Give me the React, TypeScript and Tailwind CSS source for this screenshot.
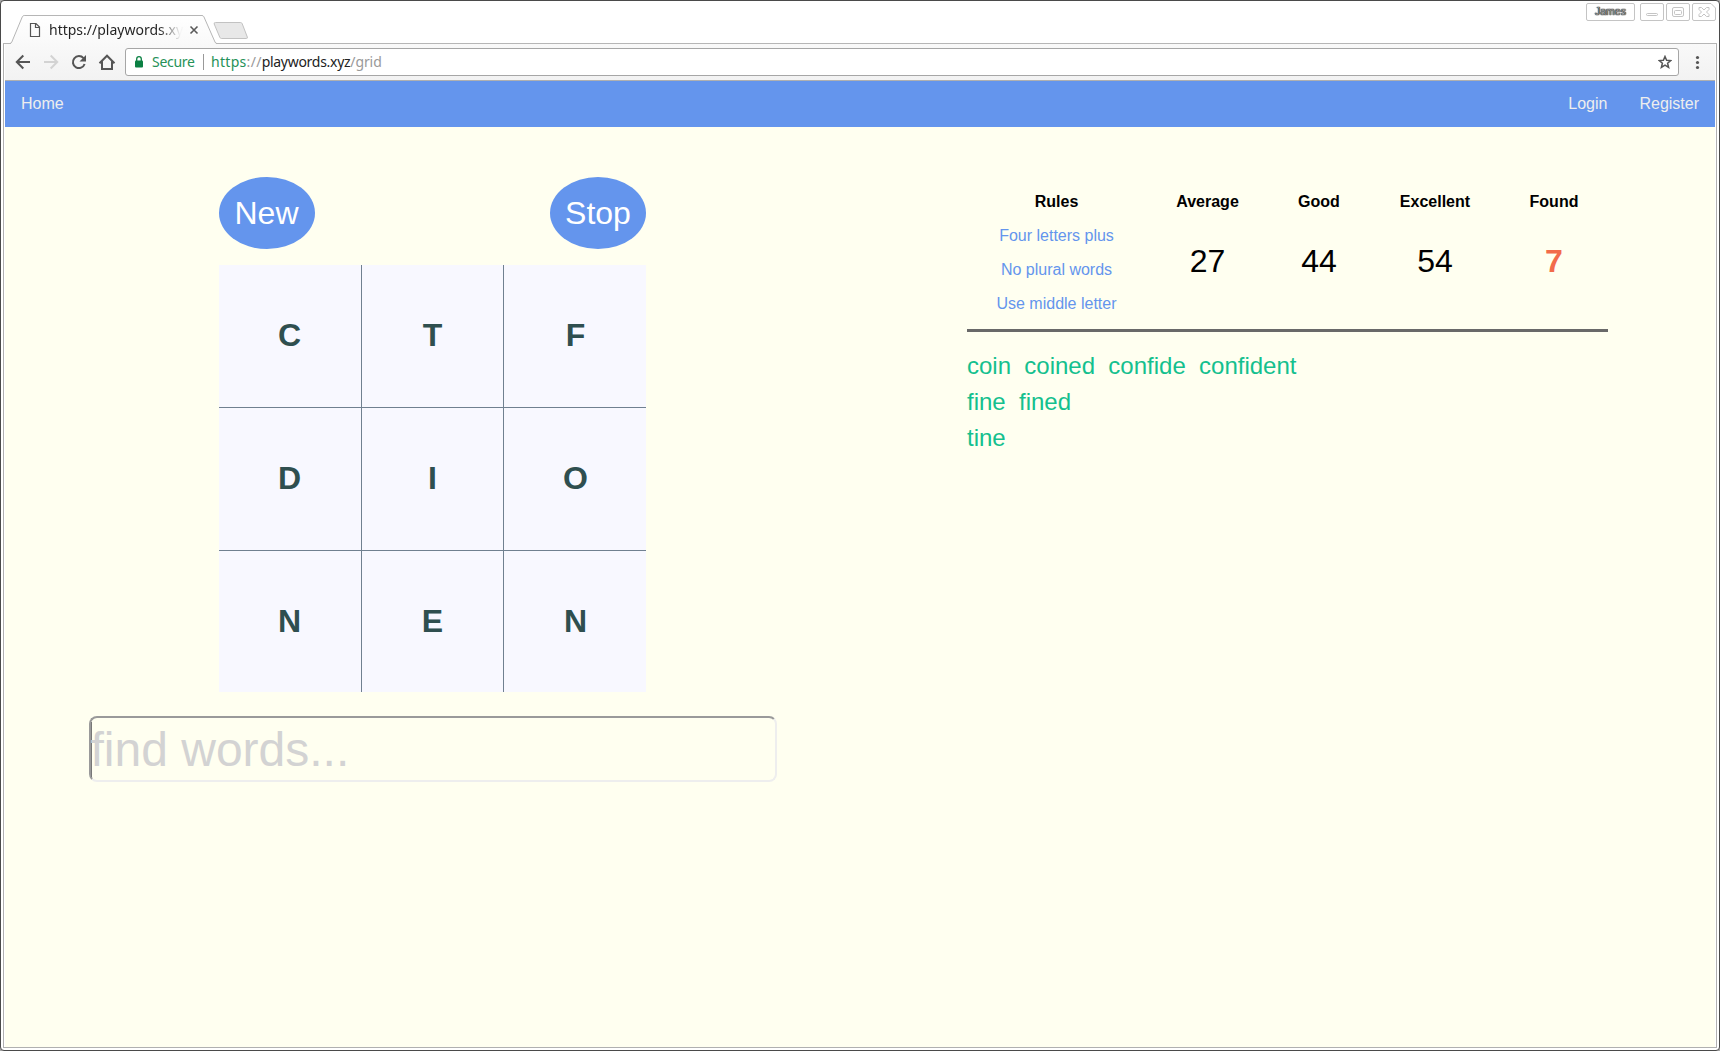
import React from "react";

const letters = ["C", "T", "F", "D", "I", "O", "N", "E", "N"];
const found = [["coin", "coined", "confide", "confident"], ["fine", "fined"], ["tine"]];
const stats = [
  { label: "Average", value: "27" },
  { label: "Good", value: "44" },
  { label: "Excellent", value: "54" },
];

function TitleBar() {
  return (
    <div className="flex h-[43px] shrink-0 justify-between border-b border-[#b6b6b6]">
      <div className="relative h-[42px] w-[260px]">
        <svg className="absolute -top-px left-[-3px]" width="250" height="45" fill="none">
          <defs>
            <linearGradient id="tab" x1="0" y1="0" x2="0" y2="1">
              <stop offset="0" stopColor="#fff" />
              <stop offset="1" stopColor="#f9f9f9" />
            </linearGradient>
          </defs>
          <path d="M11 44.500V43.500L12 41.500L22.300 16.800Q23 15.500 24.200 15.500H202Q203.200 15.500 203.900 16.800L215 41.500L216 43.500V44.500Z" fill="url(#tab)" />
          <path d="M3 43.500H9.500Q11 43.500 11.800 42L22.300 16.800Q23 15.500 24.200 15.500H202Q203.200 15.500 203.900 16.800L215 42Q215.700 43.500 217 43.500H250" stroke="#b6b6b6" />
          <path d="M215.500 22.500H240.500Q241.700 22.500 242.200 23.700L247.300 37Q247.800 38.500 246.300 38.500H221.500Q220.300 38.500 219.800 37.300L214.200 24Q213.700 22.500 215.500 22.500Z" fill="#e8e8e8" stroke="#c2c2c2" />
          <path d="M30.500 23.500H36L39.500 27V36.500H30.500Z M35.500 23.500V27.500H39.500" stroke="#555" strokeWidth="1.200" />
          <path d="M190.500 26.500L197.500 33.500M197.500 26.500L190.500 33.500" stroke="#5a5a5a" strokeWidth="1.600" />
        </svg>
        <div className="absolute top-[19px] left-[46px] w-[134px] bg-linear-to-r from-[#222] from-82% to-[#22222208] to-98% bg-clip-text font-['Noto_Sans'] text-[14px] leading-[20px] whitespace-nowrap text-transparent">
          https://playwords.xy
        </div>
      </div>
      <div className="flex gap-[2px] pt-[2px] pr-px">
        <div className="mr-[3px] flex h-[18px] w-[49px] items-center justify-center rounded-[2px] border border-[#c4c4c4] font-['Liberation_Sans'] text-[10.5px] text-[#999] [text-shadow:0_0_1px_#222,0_0_1px_#222,0_0_1px_#444]">James</div>
        <svg width="24" height="18" fill="none" stroke="#c4c4c4"><rect x=".5" y=".5" width="23" height="17" rx="1.500" /><rect x="6.500" y="10.500" width="11" height="2" rx="1" /></svg>
        <svg width="24" height="18" fill="none" stroke="#c4c4c4"><rect x=".5" y=".5" width="23" height="17" rx="1.500" /><rect x="6.500" y="4.500" width="11" height="9" rx="1.500" /><rect x="8.500" y="7.500" width="7" height="4" rx="1" /></svg>
        <svg width="24" height="18" fill="none" stroke="#c4c4c4"><path d="M2 .5H19L23.500 5V16Q23.500 17.500 22 17.500H2Q.5 17.500 .5 16V2Q.5 .5 2 .5Z" /><path d="M7 4.500H9.500L12 7L14.500 4.500H17V6.500L14.500 9L17 11.500V13.500H14.500L12 11L9.500 13.500H7V11.500L9.500 9L7 6.500Z" /></svg>
      </div>
    </div>
  );
}

function Toolbar() {
  return (
    <div className="flex h-[37px] shrink-0 items-center border-b border-[#b0b0b0] bg-linear-to-b from-[#f9f9f9] to-[#f2f2f2]">
      <svg width="120" height="36" viewBox="5 0 120 36" className="shrink-0" fill="none" stroke="#555" strokeWidth="2">
        <path d="M30 18H17.500M23.300 11.500L16.800 18L23.300 24.500" />
        <path d="M44 18H56.500M50.700 11.500L57.200 18L50.700 24.500" stroke="#d3d3d3" />
        <path d="M83.500 14.200A6 6 0 1 0 84.600 20" />
        <path d="M86 11V17.500H79.500Z" fill="#555" stroke="none" />
        <path d="M99.500 19.200L107 11.700L114.500 19.200M102 17.500V25H112V17.500" />
      </svg>
      <div className="flex h-[28px] w-[1554px] items-center rounded-[3px] border border-[#a6a6a6] bg-white font-['Noto_Sans'] text-[14px] leading-[20px]">
        <svg className="ml-[9px]" width="8" height="12" fill="#0b8043"><rect y="4.500" width="8" height="7" rx="1" /><path d="M1.700 5V3A2.300 2.300 0 0 1 6.300 3V5" fill="none" stroke="#0b8043" strokeWidth="1.300" /></svg>
        <span className="ml-[9px] w-[43px] tracking-[-0.3px] text-[#259157]">Secure</span>
        <span className="mr-[7px] ml-[8px] h-[16px] w-px bg-[#999]" />
        <span className="text-[#999]"><span className="tracking-[0.3px]"><span className="text-[#259157]">https</span>://</span><span className="tracking-[-0.29px] text-[#222]">playwords.xyz</span><span className="tracking-[-0.09px]">/grid</span></span>
        <svg className="mr-[6px] ml-auto" width="14" height="14" fill="none" stroke="#555" strokeWidth="1.500"><path d="M7 1.500L8.600 5.300L12.800 5.600L9.600 8.300L10.600 12.400L7 10.200L3.400 12.400L4.400 8.300L1.200 5.600L5.400 5.300Z" /></svg>
      </div>
      <svg className="ml-[16px]" width="5" height="15" fill="#555"><circle cx="2.500" cy="2.500" r="1.600" /><circle cx="2.500" cy="7.500" r="1.600" /><circle cx="2.500" cy="12.500" r="1.600" /></svg>
    </div>
  );
}

function Board() {
  return (
    <div className="ml-[84px] w-[688px]">
      <div className="ml-[130px] w-[427px]">
        <div className="flex justify-between text-[32px] text-white">
          <button className="h-[72px] w-[96px] rounded-[50%] bg-[#6495ed] pr-px">New</button>
          <button className="h-[72px] w-[96px] rounded-[50%] bg-[#6495ed]">Stop</button>
        </div>
        <div className="mt-[16px] grid h-[427px] grid-cols-[142px_141px_142px] grid-rows-[142px_142px_141px] gap-px bg-[#708090] text-[32px] font-bold text-[#2f4f4f]">
          {letters.map((l, i) => (
            <div key={i} className="flex items-center justify-center bg-[#f8f8ff] pb-[2px] nth-[3n]:pl-px nth-[3n+1]:pr-px">{l}</div>
          ))}
        </div>
      </div>
      <div className="mt-[24px] flex h-[66px] items-center rounded-[8px] border-2 border-t-[#9a9a9a] border-r-[#eeeeee] border-b-[#eeeeee] border-l-[#9a9a9a] text-[48px] text-[#d3d3d3]">
        <span className="h-[55px] w-px bg-[#777]" />
        <span className="-ml-[1.5px] pt-[2px]">find words...</span>
      </div>
    </div>
  );
}

function Score() {
  return (
    <div className="mt-[8px] ml-[190px] w-[641px]">
      <div className="grid grid-cols-[179px_123px_100px_132px_106px] border-b-3 border-[#696969] pb-[8px] text-center leading-[34px]">
        <div>
          <div className="font-bold">Rules</div>
          <div className="text-[#6495ed]">Four letters plus</div>
          <div className="text-[#6495ed]">No plural words</div>
          <div className="text-[#6495ed]">Use middle letter</div>
        </div>
        {stats.map((s) => (
          <div key={s.label}>
            <div className="font-bold">{s.label}</div>
            <div className="mt-[25px] text-[32px]">{s.value}</div>
          </div>
        ))}
        <div>
          <div className="font-bold">Found</div>
          <div className="mt-[25px] text-[32px] font-bold text-[#f26b4a]">7</div>
        </div>
      </div>
      <div className="mt-[16px] text-[24px] leading-[36px] text-[#14c08e]">
        {found.map((row) => (
          <div key={row[0]} className="flex gap-[13.3px]">
            {row.map((w) => <span key={w}>{w}</span>)}
          </div>
        ))}
      </div>
    </div>
  );
}

export default function App() {
  return (
    <div className="h-[1051px] w-[1720px] bg-[#aaa]">
      <div className="flex h-full flex-col rounded-[4px] border border-[#4a4a4a] bg-white px-[2px] pb-[2px] font-['Liberation_Sans',sans-serif]">
        <TitleBar />
        <div className="flex grow flex-col border-x border-b border-[#b0b0b0] px-px">
          <Toolbar />
          <nav className="flex h-[46px] shrink-0 items-center bg-[#6495ed] px-[16px] text-[16px] text-[#eeeeee]">
            <span>Home</span>
            <span className="mr-[32px] ml-auto">Login</span>
            <span>Register</span>
          </nav>
          <main className="flex grow items-start bg-[#fffff0] pt-[50px] text-[16px] text-black">
            <Board />
            <Score />
          </main>
        </div>
      </div>
    </div>
  );
}
